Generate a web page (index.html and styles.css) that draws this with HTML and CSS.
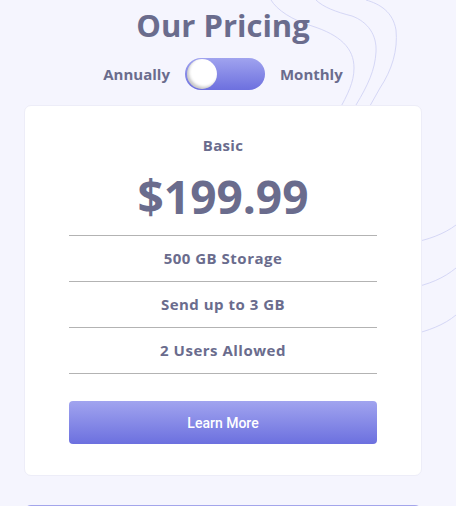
FILE: index.html
```html
<!DOCTYPE html>
<html lang="en">
<head>
<meta charset="utf-8">
<title>Our Pricing</title>
<link rel="stylesheet" href="styles.css">
</head>
<body>
<svg class="bg-lines" viewBox="0 0 456 506" width="456" height="506" aria-hidden="true">
  <path d="M271,0 C277,10 292,20 312,26 C340,35 354,48 354,68 C354,82 348,94 338,112 L320,150"/>
  <path d="M316,0 C323,7 336,12 352,16 C368,22 377,35 376,52 C375,70 368,85 356,105 L340,140"/>
  <path d="M366,0 C380,4 393,12 396,30 C398,50 392,70 380,88 L362,120"/>
  <path d="M410,243 C428,240 444,234 456,225"/>
  <path d="M410,288 C428,285 444,278 456,268"/>
  <path d="M410,335 C428,331 444,325 456,315"/>
</svg>
<main class="page">
  <h1 class="title">Our Pricing</h1>
  <div class="switch-row">
    <span class="switch-label">Annually</span>
    <span class="switch"><span class="knob"></span></span>
    <span class="switch-label">Monthly</span>
  </div>
  <section class="card">
    <h2 class="plan">Basic</h2>
    <div class="price">$199.99</div>
    <ul class="features">
      <li>500 GB Storage</li>
      <li>Send up to 3 GB</li>
      <li>2 Users Allowed</li>
    </ul>
    <button class="btn">Learn More</button>
  </section>
  <section class="card card-next"></section>
</main>
</body>
</html>
```
FILE: styles.css
```css
html, body {
  margin: 0;
  padding: 0;
}
body {
  background: #f5f5fe;
  font-family: "Open Sans", "DejaVu Sans", sans-serif;
  color: #6a6c8d;
  width: 456px;
  height: 506px;
  overflow: hidden;
  position: relative;
}
.bg-lines {
  position: absolute;
  top: 0;
  left: 0;
  z-index: 0;
  fill: none;
  stroke: #d5d7f6;
  stroke-width: 1;
}
.page {
  position: relative;
  z-index: 1;
  padding: 5px 34px 0 24px;
  display: flex;
  flex-direction: column;
}
.title {
  margin: 0;
  text-align: center;
  font-size: 31px;
  line-height: 40px;
  font-weight: 700;
}
.switch-row {
  margin-top: 13px;
  display: flex;
  justify-content: center;
  align-items: center;
  gap: 15px;
}
.switch-label {
  font-size: 15px;
  font-weight: 700;
}
.switch {
  width: 80px;
  height: 32px;
  border-radius: 16px;
  background: linear-gradient(#a0a3ef, #6d70df);
  display: flex;
  align-items: center;
  padding-left: 2px;
  box-sizing: border-box;
}
.knob {
  width: 30px;
  height: 30px;
  border-radius: 50%;
  background: #fff;
  box-shadow: inset 2px -2px 3px rgba(0, 0, 0, 0.22);
}
.card {
  margin-top: 15px;
  background: #fff;
  border: 1px solid #ededf8;
  border-radius: 7px;
  padding: 29px 44px 31px;
  display: flex;
  flex-direction: column;
  align-items: stretch;
  text-align: center;
}
.plan {
  margin: 0;
  font-size: 15px;
  line-height: 20px;
  font-weight: 700;
  letter-spacing: 0.3px;
}
.price {
  margin-top: 16px;
  font-size: 46px;
  line-height: 50px;
  font-weight: 700;
}
.features {
  list-style: none;
  margin: 14px 0 0;
  padding: 0;
  border-top: 1px solid #b3b3b3;
}
.features li {
  height: 45px;
  line-height: 45px;
  border-bottom: 1px solid #b3b3b3;
  font-size: 15px;
  font-weight: 700;
  letter-spacing: 0.5px;
}
.btn {
  margin-top: 27px;
  height: 43px;
  border: none;
  border-radius: 4px;
  background: linear-gradient(#a1a4ef, #6c70df);
  color: #fff;
  font-family: Roboto, sans-serif;
  font-size: 14px;
  font-weight: 500;
  cursor: pointer;
}
.card-next {
  margin-top: 29px;
  height: 100px;
  padding: 0;
  border: none;
  border-top: 2px solid #a3a5eb;
  background: #f3f3fb;
}
```
